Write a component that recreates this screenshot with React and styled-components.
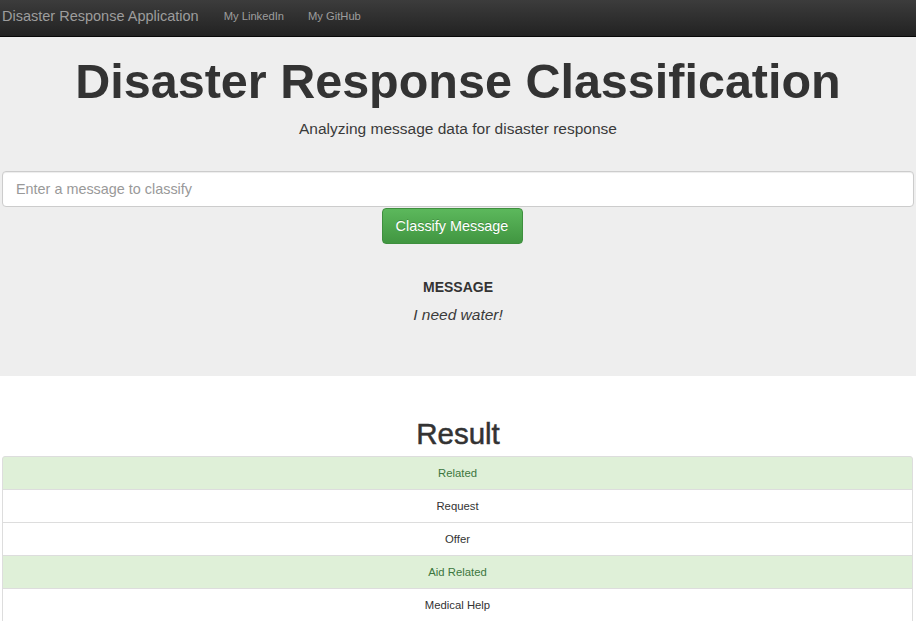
import React from "react";
import styled, { createGlobalStyle } from "styled-components";

const GlobalStyle = createGlobalStyle`
  body {
    margin: 0;
    font-family: "Liberation Sans", Arial, sans-serif;
    color: #333;
    background: #fff;
  }
  * { box-sizing: border-box; }
`;

const categories = [
  { name: "Related", hit: true },
  { name: "Request", hit: false },
  { name: "Offer", hit: false },
  { name: "Aid Related", hit: true },
  { name: "Medical Help", hit: false },
];

function App() {
  return (
    <>
      <GlobalStyle />
      <Navbar>
        <Brand>Disaster Response Application</Brand>
        <NavLink>My LinkedIn</NavLink>
        <NavLink>My GitHub</NavLink>
      </Navbar>
      <Jumbotron>
        <Title>Disaster Response Classification</Title>
        <Lead>Analyzing message data for disaster response</Lead>
        <Form>
          <MessageInput placeholder="Enter a message to classify" />
          <ClassifyButton>Classify Message</ClassifyButton>
        </Form>
        <MessageLabel>MESSAGE</MessageLabel>
        <MessageText>I need water!</MessageText>
      </Jumbotron>
      <ResultSection>
        <ResultTitle>Result</ResultTitle>
        <ResultList>
          {categories.map((c) => (
            <ResultItem key={c.name} $hit={c.hit}>
              {c.name}
            </ResultItem>
          ))}
        </ResultList>
      </ResultSection>
    </>
  );
}

const Navbar = styled.nav`
  display: flex;
  align-items: center;
  height: 37px;
  padding-bottom: 4px;
  background: linear-gradient(to bottom, #3c3c3c 0%, #222 100%);
  border-bottom: 1px solid #080808;
`;

const Brand = styled.span`
  font-size: 14.5px;
  color: #9d9d9d;
  padding: 0 13px 0 2px;
`;

const NavLink = styled.span`
  font-size: 11.2px;
  color: #9d9d9d;
  padding: 0 12px;
`;

const Jumbotron = styled.section`
  background: #eee;
  height: 339px;
  padding: 16px 2px 0;
  text-align: center;
`;

const Title = styled.h1`
  margin: 0;
  font-size: 48.5px;
  line-height: 56px;
  font-weight: 700;
  color: #333;
`;

const Lead = styled.p`
  margin: 10px 0 0;
  font-size: 15.5px;
  font-weight: 300;
  line-height: 20px;
  color: #3a3a3a;
`;

const Form = styled.div`
  display: flex;
  flex-direction: column;
  align-items: center;
  margin-top: 32px;
`;

const MessageInput = styled.input`
  width: 100%;
  height: 36px;
  padding: 0 13px;
  font-family: inherit;
  font-size: 14.4px;
  color: #555;
  background: #fff;
  border: 1px solid #ccc;
  border-radius: 4px;
  box-shadow: inset 0 1px 1px rgba(0, 0, 0, 0.075);
  outline: none;
  &::placeholder { color: #999; }
`;

const ClassifyButton = styled.button`
  margin: 1px 12px 0 0;
  width: 141px;
  height: 36px;
  padding: 0;
  font-family: inherit;
  font-size: 14.4px;
  color: #fff;
  background: linear-gradient(to bottom, #5cb85c 0%, #419641 100%);
  border: 1px solid #3e8f3e;
  border-radius: 4px;
  text-shadow: 0 -1px 0 rgba(0, 0, 0, 0.2);
`;

const MessageLabel = styled.div`
  margin-top: 35px;
  font-size: 14px;
  font-weight: 700;
  line-height: 16px;
  color: #333;
`;

const MessageText = styled.div`
  margin-top: 10px;
  font-size: 15.5px;
  font-style: italic;
  font-weight: 300;
  line-height: 20px;
  color: #3a3a3a;
`;

const ResultSection = styled.section`
  padding: 40px 2px 0;
  text-align: center;
`;

const ResultTitle = styled.h2`
  margin: 0 0 4px;
  font-size: 29.5px;
  line-height: 36px;
  font-weight: 500;
  color: #333;
  -webkit-text-stroke: 0.5px #333;
`;

const ResultList = styled.ul`
  list-style: none;
  margin: 0;
  padding: 0;
  width: 911px;
`;

const ResultItem = styled.li`
  height: 34px;
  line-height: 32px;
  font-size: 11.3px;
  color: ${(p) => (p.$hit ? "#3c763d" : "#333")};
  background: ${(p) => (p.$hit ? "#dff0d8" : "#fff")};
  border: 1px solid #ddd;
  margin-bottom: -1px;
  &:first-child { border-top-left-radius: 3px; border-top-right-radius: 3px; }
`;

export default App;
